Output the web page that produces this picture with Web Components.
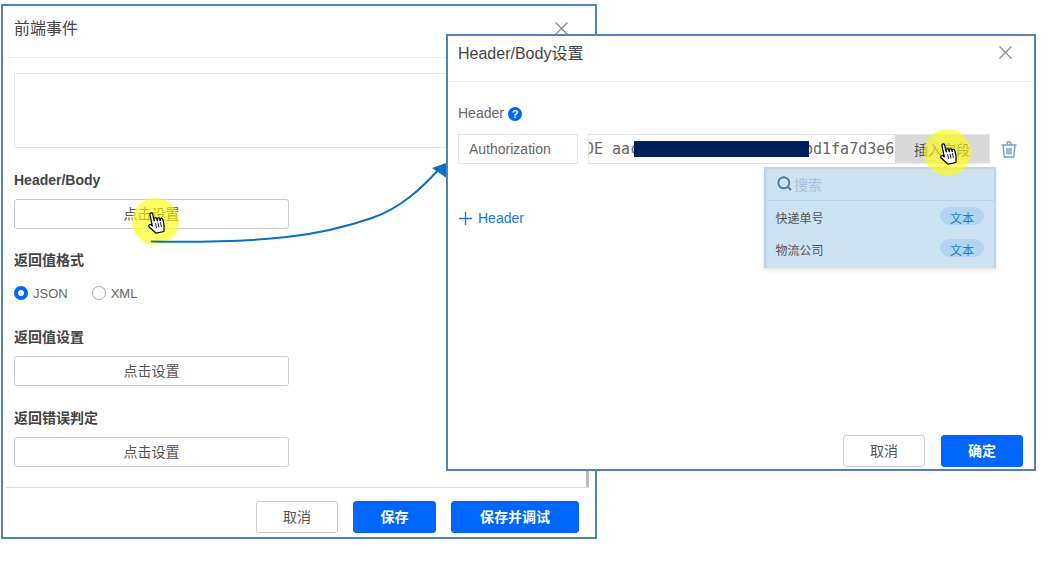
<!DOCTYPE html>
<html lang="zh">
<head>
<meta charset="utf-8">
<title>前端事件</title>
<style>
    html, body {
        margin: 0;
        background: #fff;
    }

    body {
        font-family: "Liberation Sans", "Noto Sans CJK SC", sans-serif;
        font-size: 14px;
        color: #333;
    }

    #desk {
        position: relative;
        width: 1053px;
        height: 588px;
        overflow: hidden;
    }

    #left {
        left: 1px;
        top: 4px;
        width: 596px;
        height: 535px;
        --inset-l: 3px;
        --inset-r: 6px;
        --head-l: 8px;
        --head-r: 21px;
        --head-b: 10px;
        --close-top: 4px;
        --foot-r: 10px;
        --foot-b: 4px;
        --foot-line: #ddd;
    }

    #right {
        left: 446px;
        top: 34px;
        width: 590px;
        height: 437px;
        --inset-l: 0px;
        --inset-r: 0px;
        --head-l: 10px;
        --head-r: 22px;
        --head-b: 14px;
        --close-top: 1px;
        --foot-r: 11px;
        --foot-b: 2px;
        --foot-line: transparent;
    }

    #arrow {
        position: absolute;
        left: 0;
        top: 0;
    }

    #mark1 {
        left: 132px;
        top: 198px;
    }

    #mark2 {
        left: 924px;
        top: 129px;
    }

    .actions {
        display: flex;
    }
</style>
</head>
<body>
<div id="desk">
    <app-window id="left" heading="前端事件" head="52" scrollbar>
        <div style="height:75px; margin:15px 0 0 11px; width:600px; box-sizing:border-box; border:1px solid #e4e4e4; border-radius:2px"></div>
        <form-section label="Header/Body" style="margin-top:24px"><set-button>点击设置</set-button></form-section>
        <form-section label="返回值格式" style="margin-top:23px">
            <radio-group></radio-group>
        </form-section>
        <form-section label="返回值设置" style="margin-top:27px"><set-button>点击设置</set-button></form-section>
        <form-section label="返回错误判定" style="margin-top:24px"><set-button>点击设置</set-button></form-section>
        <div slot="footer" class="actions">
            <app-button width="82">取消</app-button>
            <app-button width="83" primary style="margin-left:15px">保存</app-button>
            <app-button width="128" primary style="margin-left:15px">保存并调试</app-button>
        </div>
    </app-window>

    <click-mark id="mark1"></click-mark>

    <svg id="arrow" width="1053" height="588" viewBox="0 0 1053 588" fill="none">
        <path d="M151 241.5 C270 243 320 236 372 218 C401 208 422 188 440 168" stroke="#0a70bf" stroke-width="2"/>
        <path d="M449 162 L448 179 L432 168 Z" fill="#0a70bf"/>
    </svg>

    <app-window id="right" heading="Header/Body设置" head="46">
        <header-editor></header-editor>
        <div slot="footer" class="actions">
            <app-button width="82">取消</app-button>
            <app-button width="82" primary style="margin-left:16px">确定</app-button>
        </div>
    </app-window>

    <click-mark id="mark2"></click-mark>
</div>

<script>
// Jendela dialog
class AppWindow extends HTMLElement {
    constructor() {
        super();
        this.shadowHTML = this.attachShadow({ mode: "open" });
    }

    connectedCallback() {
        const bar = this.hasAttribute("scrollbar") ? `<i class="bar"></i>` : "";
        this.shadowHTML.innerHTML = `
        <style>
            :host {
                position: absolute;
                display: flex;
                flex-direction: column;
                box-sizing: border-box;
                background: #fff;
                border: 2px solid #4f81bd;
            }

            header {
                height: ${this.getAttribute("head")}px;
                display: flex;
                align-items: center;
                justify-content: space-between;
                margin: 0 var(--inset-r) 0 var(--inset-l);
                padding: 0 var(--head-r) var(--head-b) var(--head-l);
                box-sizing: border-box;
                font-size: 16px;
                color: #444;
                border-bottom: 1px solid #eee;
                flex: none;
            }

            header svg {
                display: block;
                margin-top: var(--close-top);
            }

            main {
                flex: 1;
                min-height: 0;
                position: relative;
                overflow: hidden;
            }

            footer {
                flex: none;
                display: flex;
                justify-content: flex-end;
                margin: 0 var(--inset-r) 0 var(--inset-l);
                padding: 13px var(--foot-r) var(--foot-b) 0;
                border-top: 1px solid var(--foot-line);
            }

            .bar {
                position: absolute;
                right: 6px;
                bottom: 0;
                width: 3px;
                height: 16px;
                background: #bbb;
            }
        </style>
        <header>
            <span>${this.getAttribute("heading")}</span>
            <svg width="13" height="13" viewBox="0 0 13 13"><path d="M.5 .5 12.5 12.5M12.5 .5 .5 12.5" stroke="#8a8a8a" stroke-width="1.3"/></svg>
        </header>
        <main><slot></slot>${bar}</main>
        <footer><slot name="footer"></slot></footer>
        `;
    }
}

// Judul kecil + isi
class FormSection extends HTMLElement {
    constructor() {
        super();
        this.shadowHTML = this.attachShadow({ mode: "open" });
    }

    connectedCallback() {
        this.shadowHTML.innerHTML = `
        <style>
            :host {
                display: block;
                padding-left: 11px;
            }

            h4 {
                margin: 0 0 9px;
                height: 18px;
                font-size: 14px;
                line-height: 16px;
                font-weight: 700;
                color: #444;
            }
        </style>
        <h4>${this.getAttribute("label")}</h4>
        <slot></slot>
        `;
    }
}

class SetButton extends HTMLElement {
    constructor() {
        super();
        this.shadowHTML = this.attachShadow({ mode: "open" });
        this.shadowHTML.innerHTML = `
        <style>
            :host {
                display: flex;
                align-items: center;
                justify-content: center;
                box-sizing: border-box;
                width: 275px;
                height: 30px;
                padding-bottom: 2px;
                border: 1px solid #ccc;
                border-radius: 3px;
                font-size: 14px;
                color: #555;
            }
        </style>
        <slot></slot>
        `;
    }
}

class AppButton extends HTMLElement {
    constructor() {
        super();
        this.shadowHTML = this.attachShadow({ mode: "open" });
    }

    connectedCallback() {
        const primary = this.hasAttribute("primary");
        this.shadowHTML.innerHTML = `
        <style>
            :host {
                display: inline-flex;
                align-items: center;
                justify-content: center;
                box-sizing: border-box;
                width: ${this.getAttribute("width")}px;
                height: 32px;
                padding-bottom: 2px;
                border-radius: 3px;
                font-size: 14px;
                font-weight: ${primary ? 700 : 400};
                color: ${primary ? "#fff" : "#555"};
                background: ${primary ? "#0066ff" : "#fff"};
                border: 1px solid ${primary ? "#0066ff" : "#ccc"};
            }
        </style>
        <slot></slot>
        `;
    }
}

class RadioGroup extends HTMLElement {
    constructor() {
        super();
        this.shadowHTML = this.attachShadow({ mode: "open" });
        this.shadowHTML.innerHTML = `
        <style>
            :host {
                display: flex;
                align-items: center;
                gap: 24px;
                height: 18px;
                margin-top: 14px;
                font-size: 13px;
                color: #666;
            }

            label {
                display: flex;
                align-items: center;
                gap: 5px;
            }

            i {
                width: 14px;
                height: 14px;
                box-sizing: border-box;
                border-radius: 50%;
                border: 1px solid #aab;
            }

            i.on {
                border: 4px solid #0066ff;
            }
        </style>
        <label><i class="on"></i>JSON</label>
        <label><i></i>XML</label>
        `;
    }
}

// Isi jendela kanan
class HeaderEditor extends HTMLElement {
    constructor() {
        super();
        this.shadowHTML = this.attachShadow({ mode: "open" });
        this.shadowHTML.innerHTML = `
        <style>
            :host {
                display: block;
                padding: 22px 0 0 10px;
                position: relative;
                color: #666;
            }

            .title {
                display: flex;
                align-items: center;
                gap: 4px;
                height: 18px;
                font-size: 14px;
            }

            .title svg {
                margin-top: 2px;
            }

            .row {
                display: flex;
                align-items: center;
                margin-top: 12px;
            }

            .key {
                width: 120px;
                height: 30px;
                box-sizing: border-box;
                border: 1px solid #e4e4e4;
                display: flex;
                align-items: center;
                padding-left: 10px;
                font-size: 14px;
                margin-right: 10px;
            }

            .value {
                width: 402px;
                height: 30px;
                box-sizing: border-box;
                border: 1px solid #e4e4e4;
                display: flex;
                align-items: center;
                overflow: hidden;
                font: 15px "DejaVu Sans Mono", monospace;
            }

            .head {
                margin-left: -4px;
                width: 49px;
                flex: none;
                white-space: pre;
            }

            .mask {
                position: relative;
                z-index: 1;
                width: 175px;
                height: 16px;
                flex: none;
                background: #001f5e;
            }

            .tail {
                flex: 1;
                margin-left: -5px;
            }

            .insert {
                width: 94px;
                flex: none;
                height: 100%;
                display: flex;
                align-items: center;
                justify-content: center;
                background: #d9d9d9;
                font: 14px "Liberation Sans", "Noto Sans CJK SC", sans-serif;
                color: #555;
            }

            .trash {
                margin-left: 11px;
                display: block;
            }

            .add {
                display: flex;
                align-items: center;
                gap: 6px;
                margin: 45px 0 0 1px;
                height: 18px;
                font-size: 14px;
                color: #1a73e8;
            }

            field-menu {
                position: absolute;
                left: 316px;
                top: 85px;
            }
        </style>
        <div class="title">Header
            <svg width="14" height="14" viewBox="0 0 14 14"><circle cx="7" cy="7" r="7" fill="#0066ff"/><text x="7" y="11" text-anchor="middle" font-family="Liberation Sans" font-size="11" font-weight="700" fill="#fff">?</text></svg>
        </div>
        <div class="row">
            <div class="key">Authorization</div>
            <div class="value">
                <span class="head">DE aac</span><span class="mask"></span><span class="tail">bd1fa7d3e6</span>
                <span class="insert">插入字段</span>
            </div>
            <svg class="trash" width="16" height="17" viewBox="0 0 16 17" fill="none" stroke="#6f9fd8" stroke-width="1.4">
                <path d="M.5 4H15.5M5.5 4 6.5 1H9.5L10.5 4M2 4 3.3 16H12.7L14 4M6 7V13.5M8 7V13.5M10 7V13.5"/>
            </svg>
        </div>
        <div class="add">
            <svg width="13" height="13" viewBox="0 0 13 13"><path d="M6.5 0V13M0 6.5H13" stroke="#1a73e8" stroke-width="1.3"/></svg>
            Header
        </div>
        <field-menu></field-menu>
        `;
    }
}

// Menu pilih kolom (sorotan biru muda)
class FieldMenu extends HTMLElement {
    constructor() {
        super();
        this.shadowHTML = this.attachShadow({ mode: "open" });
        this.shadowHTML.innerHTML = `
        <style>
            :host {
                display: block;
                box-sizing: border-box;
                width: 232px;
                height: 101px;
                background: #cce2f1;
                border: solid #bdd6e8;
                border-width: 2px 2px 0 3px;
                box-shadow: 0 2px 5px rgba(0, 0, 0, .12);
                font-size: 12px;
                color: #555;
            }

            .search {
                display: flex;
                align-items: center;
                gap: 2px;
                height: 29px;
                padding: 0 0 2px 10px;
                border-bottom: 1px solid #b8d1e3;
                color: #a9c2dc;
                font-size: 14px;
            }

            .item {
                display: flex;
                align-items: center;
                justify-content: space-between;
                height: 32px;
                padding: 0 10px 0 8.5px;
            }

            .item b {
                box-sizing: border-box;
                width: 44px;
                height: 18px;
                margin-top: -2px;
                padding-top: 2px;
                border-radius: 9px;
                background: #b2d5f3;
                color: #1a80e0;
                font-weight: 400;
                display: flex;
                align-items: center;
                justify-content: center;
            }
        </style>
        <div class="search">
            <svg width="15" height="15" viewBox="0 0 15 15" fill="none" stroke="#567ca0" stroke-width="2"><circle cx="6.8" cy="6.8" r="5.5"/><path d="M10.8 10.8 14 14"/></svg>
            搜索
        </div>
        <div class="item"><span>快递单号</span><b>文本</b></div>
        <div class="item"><span>物流公司</span><b>文本</b></div>
        `;
    }
}

// Lingkaran kuning + kursor tangan
class ClickMark extends HTMLElement {
    constructor() {
        super();
        this.shadowHTML = this.attachShadow({ mode: "open" });
        this.shadowHTML.innerHTML = `
        <style>
            :host {
                position: absolute;
                display: block;
                width: 47px;
                height: 47px;
                border-radius: 50%;
                background: rgba(255, 255, 0, .6);
            }

            svg {
                position: absolute;
                left: 15px;
                top: 13px;
            }
        </style>
        <svg width="18" height="24" viewBox="0 0 18 24">
            <g transform="rotate(-12 9 12)">
                <path d="M4.8 2.5a1.4 1.4 0 0 1 2.8 0V9.5h.4V8a1.3 1.3 0 0 1 2.6 0V10h.3V8.8a1.3 1.3 0 0 1 2.6 0V10.5h.3V9.8a1.3 1.3 0 0 1 2.6 0V16L15 22H7L1.5 14.5a1.4 1.4 0 0 1 2.2-1.8L4.8 14Z" fill="#fff" stroke="#000" stroke-width="1.2" stroke-linejoin="round"/>
                <path d="M8.5 12V17M11 12V17M13.5 12V17" stroke="#000" stroke-width=".8"/>
            </g>
        </svg>
        `;
    }
}

customElements.define("app-window", AppWindow);
customElements.define("form-section", FormSection);
customElements.define("set-button", SetButton);
customElements.define("app-button", AppButton);
customElements.define("radio-group", RadioGroup);
customElements.define("field-menu", FieldMenu);
customElements.define("header-editor", HeaderEditor);
customElements.define("click-mark", ClickMark);
</script>
</body>
</html>
